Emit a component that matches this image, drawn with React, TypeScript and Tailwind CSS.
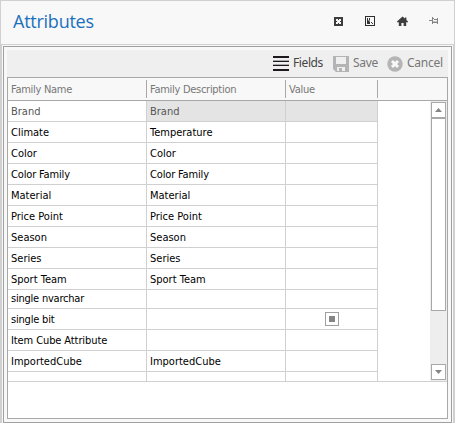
const ROWS: { name: string; desc: string; h: string; state?: string; tight?: string }[] = [
  { name: 'Brand', desc: 'Brand', h: 'h-[21px]', state: 'selected' },
  { name: 'Climate', desc: 'Temperature', h: 'h-[21px]' },
  { name: 'Color', desc: 'Color', h: 'h-[21px]' },
  { name: 'Color Family', desc: 'Color Family', h: 'h-[21px]', tight: 'tracking-[-0.15px]' },
  { name: 'Material', desc: 'Material', h: 'h-[21px]' },
  { name: 'Price Point', desc: 'Price Point', h: 'h-[21px]' },
  { name: 'Season', desc: 'Season', h: 'h-[21px]' },
  { name: 'Series', desc: 'Series', h: 'h-[21px]' },
  { name: 'Sport Team', desc: 'Sport Team', h: 'h-[21px]' },
  { name: 'single nvarchar', desc: '', h: 'h-[19px]', tight: 'tracking-[-0.22px] pb-[2px]' },
  { name: 'single bit', desc: '', h: 'h-[21px]', state: 'check', tight: 'tracking-[-0.2px]' },
  { name: 'Item Cube Attribute', desc: '', h: 'h-[21px]', tight: 'tracking-[-0.1px]' },
  { name: 'ImportedCube', desc: 'ImportedCube', h: 'h-[21px]' },
  { name: '', desc: '', h: 'h-[9px]' },
];

function WindowIcons() {
  return (
    <div className="flex items-center">
      <svg width="9" height="9" viewBox="0 0 9 9" shapeRendering="crispEdges">
        <path d="M0 0h9v9H0z" fill="#3d3d3d" />
        <path d="M2 2h2v1h1V2h2v2H6v1h1v2H5V6H4v1H2V5h1V4H2z" fill="#f8f8f8" />
      </svg>
      <svg className="ml-[22px]" width="10" height="10" viewBox="0 0 10 10" shapeRendering="crispEdges">
        <path d="M0 0h10v10H0zM1 1v8h8V1z" fillRule="evenodd" fill="#2d2d2d" />
        <path d="M2 2h1v6H2zM4 2h1v2H4zM3 5h1v3H3zM4 6h1v2H4zM6 6h1v1H6zM7 7h1v1H7z" fill="#333" />
        <path d="M3 4h1v1H3zM4 4h1v2H4z" fill="#888" />
      </svg>
      <svg className="ml-[22px]" width="11" height="10" viewBox="0 0 11 10">
        <path d="M5.5 0.5 8 2.6V1.4h1.4v2.5L11 5.4v.8H9.2V10H6.6V7H4.4v3H1.8V6.2H0v-.8z" fill="#3d3d3d" />
      </svg>
      <svg className="ml-[21px]" width="10" height="8" viewBox="0 0 10 8" fill="none" stroke="#858585" shapeRendering="crispEdges">
        <path d="M0 3.5h3M3.5 0v7M4 1.5h1M5 2.5h3M4 5.5h4M8.5 1v6" />
        <path d="M4 4.5h4" stroke="#c4c4c4" />
      </svg>
    </div>
  );
}

function ScrollBar() {
  return (
    <div className="flex h-[280px] w-[17px] flex-col bg-[#eeeeee] px-px pt-px">
      <div className="flex h-4 shrink-0 items-center justify-center border border-[#a8a8a8] bg-white">
        <svg width="7" height="4" viewBox="0 0 7 4"><path d="M3.5 0 7 4H0z" fill="#858585" /></svg>
      </div>
      <div className="h-[193px] shrink-0 border border-[#a8a8a8] bg-white" />
      <div className="mt-[53px] flex h-4 shrink-0 items-center justify-center border border-[#a8a8a8] bg-white">
        <svg width="7" height="4" viewBox="0 0 7 4"><path d="M0 0h7L3.5 4z" fill="#858585" /></svg>
      </div>
    </div>
  );
}

export default function App() {
  return (
    <div className="flex h-[423px] w-[455px] flex-col overflow-hidden bg-[#f8f8f8] font-['DejaVu_Sans_Condensed','DejaVu_Sans',sans-serif]">
      <header className="flex h-[45px] shrink-0 items-center justify-between border border-[#d0d0d0] pr-[15px] pl-3">
        <h1 className="pb-[3px] font-['Open_Sans',sans-serif] text-[18px] leading-6 tracking-[-0.25px] text-[#1a70bd]">Attributes</h1>
        <div className="pb-[3px]"><WindowIcons /></div>
      </header>
      <div className="h-[378px] border-x-2 border-[#d0d0d0] px-px pt-px">
        <section className="h-[377px] w-[449px] border border-[#a0a0a0] p-[3px]">
          <div className="flex h-[27px] items-center bg-[#efefef] pl-[266px] font-['Noto_Sans',sans-serif] text-[12px] text-[#777]">
            <svg width="16" height="15" viewBox="0 0 16 15" shapeRendering="crispEdges">
              <path d="M0 0h16v2H0zM0 5h16v1H0zM0 9h16v1H0zM0 13h16v2H0z" fill="#1c181c" />
              <path d="M0 4h16v1H0zM0 8h16v1H0z" fill="#aaa" />
            </svg>
            <span className="ml-1 w-10 pb-px tracking-[-0.4px] whitespace-nowrap text-[#444]">Fields</span>
            <svg width="16" height="16" viewBox="0 0 16 16" fill="#b4b4b4">
              <path fillRule="evenodd" d="M0 0h16v16H3L0 13zM3 1v7h10V1zM4 11v4h2v-3h3v3h3v-4z" />
            </svg>
            <span className="ml-1 w-[34px] pb-px tracking-[-0.3px] whitespace-nowrap">Save</span>
            <svg width="16" height="16" viewBox="0 0 16 16">
              <circle cx="8" cy="8" r="7.7" fill="#b4b4b4" />
              <path d="m5 5 6 6M11 5l-6 6" stroke="#f8f8f8" strokeWidth="3" />
            </svg>
            <span className="ml-1 pb-px tracking-[-0.25px] whitespace-nowrap">Cancel</span>
          </div>
          <div className="h-[342px] w-[441px] border border-[#a8a8a8] bg-white text-[11px]">
            <div className="flex h-[23px] items-center border-b border-[#a8a8a8] bg-[#f8f8f8] tracking-[-0.28px] text-[#777]">
              <div className="flex h-[18px] w-[139px] items-center border-r border-[#a8a8a8] pt-[2px] pl-[3px]">Family Name</div>
              <div className="flex h-[18px] w-[139px] items-center border-r border-[#a8a8a8] pt-[2px] pl-[3px]">Family Description</div>
              <div className="flex h-[18px] w-[92px] items-center border-r border-[#a8a8a8] pt-[2px] pl-[3px]">Value</div>
            </div>
            <div className="flex h-[281px] justify-between border-b border-[#d0d0d0]">
              <div className="w-[370px]">
                {ROWS.map((row, i) => (
                  <div key={i} className={`flex ${row.h} leading-none whitespace-nowrap ${row.state === 'selected' ? 'text-[#555]' : 'text-black'}`}>
                    <div className={`flex w-[139px] items-center border-r border-[#d0d0d0] pl-[3px] ${row.name ? 'border-b' : ''} ${row.tight ?? ''}`}>{row.name}</div>
                    <div className={`flex w-[139px] items-center border-r border-[#d0d0d0] pl-[3px] ${row.name ? 'border-b' : ''} ${row.tight ?? ''} ${row.state === 'selected' ? 'bg-[#e4e4e4]' : ''}`}>{row.desc}</div>
                    <div className={`flex w-[92px] items-center justify-center border-r border-[#d0d0d0] ${row.name ? 'border-b' : ''} ${row.state === 'selected' ? 'bg-[#e4e4e4]' : ''}`}>
                      {row.state === 'check' && (
                        <div className="flex size-[14px] items-center justify-center border border-[#a0a0a0]"><div className="size-[6px] bg-[#858585]" /></div>
                      )}
                    </div>
                  </div>
                ))}
              </div>
              <ScrollBar />
            </div>
          </div>
        </section>
      </div>
    </div>
  );
}
